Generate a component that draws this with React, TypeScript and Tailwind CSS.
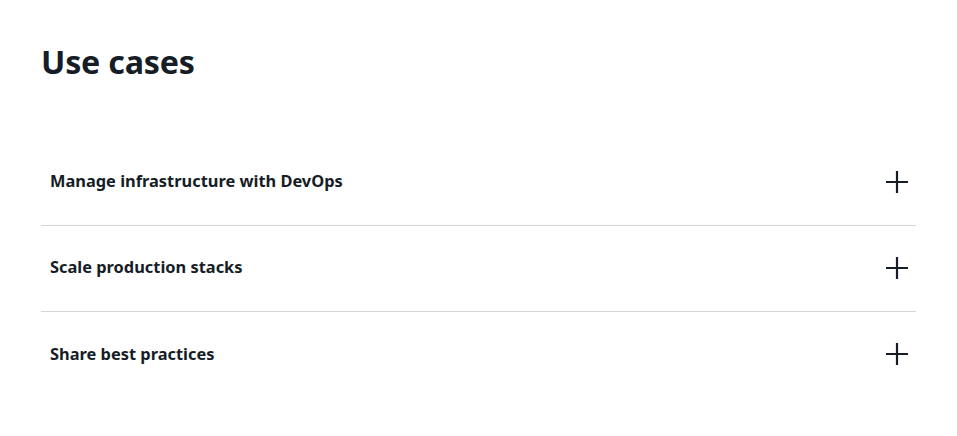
import React from "react";

const items = ["Manage infrastructure with DevOps", "Scale production stacks", "Share best practices"];

function Plus() {
  return (
    <svg width="22" height="22" viewBox="0 0 22 22" fill="none" stroke="#161d26" strokeWidth="2.2">
      <path d="M11 0v22M0 11h22" />
    </svg>
  );
}

export default function App() {
  return (
    <div className="w-[957px] h-[436px] bg-white text-[#161d26] px-[41px] pt-[40px]" style={{ fontFamily: '"Noto Sans", sans-serif' }}>
      <h2 className="text-[32.2px] font-bold leading-[44px] tracking-[-0.2px]">Use cases</h2>
      <div className="mt-[56px] w-[875px]">
        {items.map((t, i) => (
          <div key={t} className={`flex items-center justify-between h-[86px] pl-[9px] pr-[8px] pb-[2px] ${i < items.length - 1 ? "border-b border-[#d5d5d5]" : ""}`}>
            <span className="text-[16.4px] font-bold">{t}</span>
            <Plus />
          </div>
        ))}
      </div>
    </div>
  );
}
